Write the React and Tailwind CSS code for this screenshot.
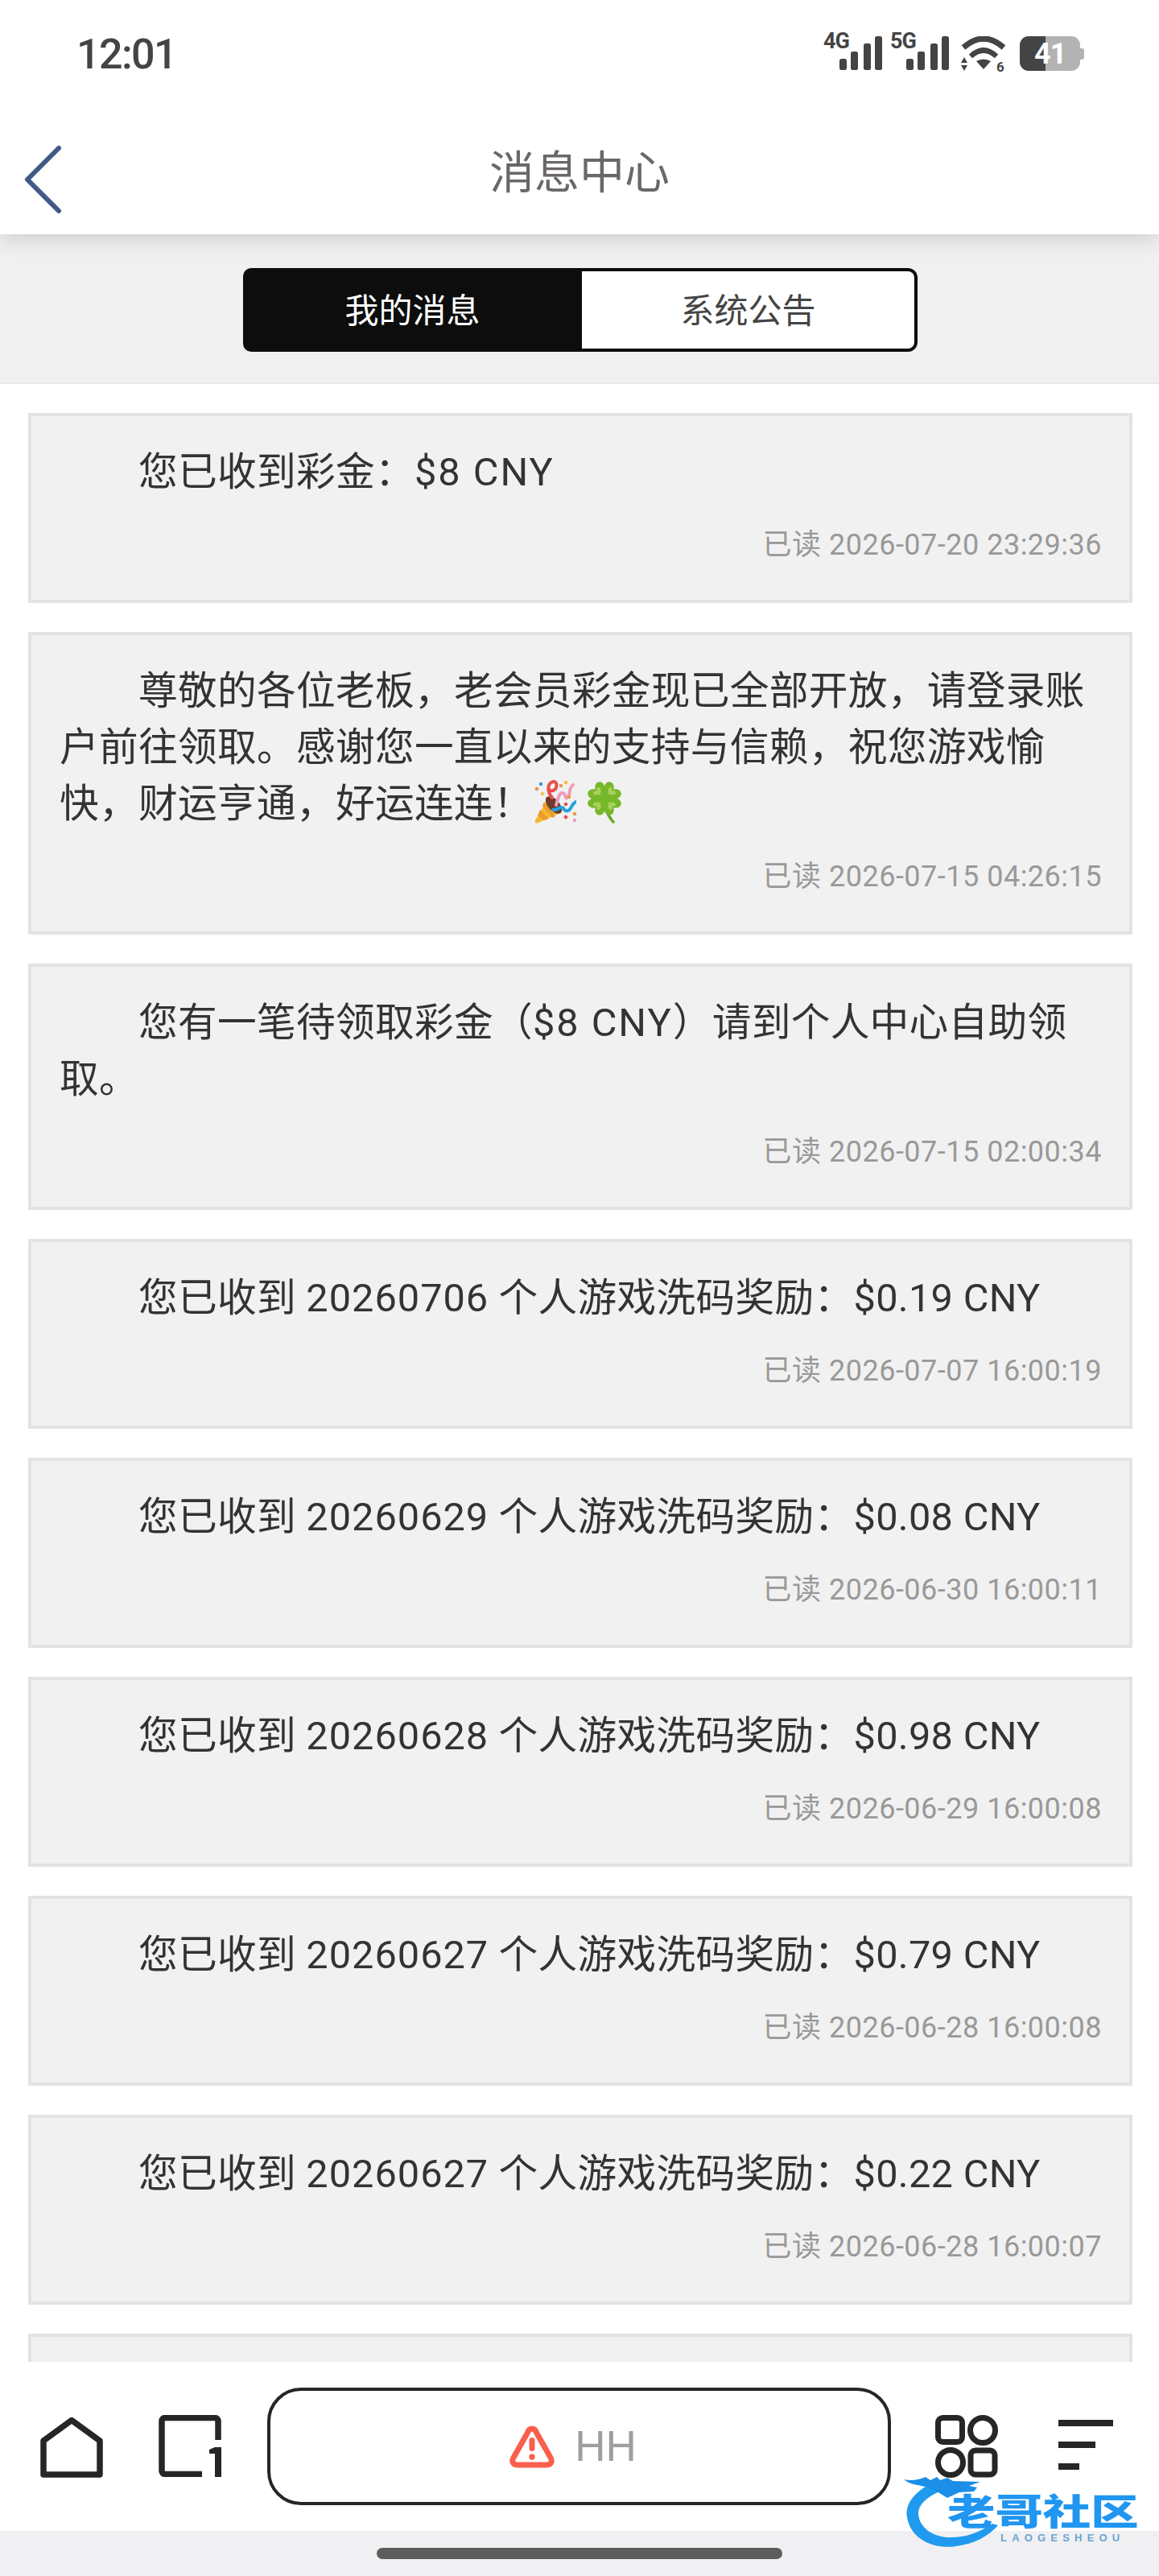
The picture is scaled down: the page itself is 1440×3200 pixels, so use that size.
import React from 'react';

const FONT = { fontFamily: 'Roboto, "Noto Sans CJK SC", sans-serif' };

const messages = [
  { text: '您已收到彩金：$8 CNY', time: '已读 2026-07-20 23:29:36' },
  {
    text: '尊敬的各位老板，老会员彩金现已全部开放，请登录账户前往领取。感谢您一直以来的支持与信赖，祝您游戏愉快，财运亨通，好运连连！',
    time: '已读 2026-07-15 04:26:15',
    emoji: true,
  },
  { text: '您有一笔待领取彩金（$8 CNY）请到个人中心自助领\n取。', time: '已读 2026-07-15 02:00:34' },
  { text: '您已收到 20260706 个人游戏洗码奖励：$0.19 CNY', time: '已读 2026-07-07 16:00:19' },
  { text: '您已收到 20260629 个人游戏洗码奖励：$0.08 CNY', time: '已读 2026-06-30 16:00:11' },
  { text: '您已收到 20260628 个人游戏洗码奖励：$0.98 CNY', time: '已读 2026-06-29 16:00:08' },
  { text: '您已收到 20260627 个人游戏洗码奖励：$0.79 CNY', time: '已读 2026-06-28 16:00:08' },
  { text: '您已收到 20260627 个人游戏洗码奖励：$0.22 CNY', time: '已读 2026-06-28 16:00:07' },
  { text: '', time: '' },
];

const Signal = ({ label }) => (
  <svg width="73" height="53" viewBox="0 -5 73 53" className="-mt-[5px] block">
    <text x="0" y="20" fontSize="27" fontWeight="700" fill="#444" fontFamily="Roboto, sans-serif" letterSpacing="-1">{label}</text>
    <rect x="20" y="33" width="9" height="14" rx="2.5" fill="#444" />
    <rect x="34" y="24" width="9" height="23" rx="2.5" fill="#444" />
    <rect x="50" y="14" width="9" height="33" rx="2.5" fill="#444" />
    <rect x="64" y="5" width="9" height="42" rx="2.5" fill="#444" />
  </svg>
);

const Wifi = () => (
  <svg width="58" height="50" viewBox="0 0 58 50" className="block">
    <path d="M3 14 Q28 -8 53 14" fill="none" stroke="#444" strokeWidth="7" />
    <path d="M12 25 Q28 10 44 25" fill="none" stroke="#444" strokeWidth="6.5" />
    <path d="M19 31 Q28 26 37 31 L28 41 Z" fill="#444" />
    <path d="M4 26 L8 33 H0 Z M0 36 H8 L4 43 Z" fill="#444" />
    <text x="44" y="44" fontSize="17" fontWeight="700" fill="#444" fontFamily="Roboto, sans-serif">6</text>
  </svg>
);

const Battery = () => (
  <div className="relative flex h-[43px] w-[80px] items-center">
    <div className="flex h-full w-[75px] overflow-hidden rounded-[11px]">
      <div className="h-full w-[32px] bg-[#444]" />
      <div className="h-full flex-1 bg-[#b3b3b3]" />
    </div>
    <div className="h-[14px] w-[5px] rounded-r-[3px] bg-[#b3b3b3]" />
    <span className="absolute left-[18px] top-[2px] text-[36px] font-bold leading-[40px] tracking-[-1px] text-white" style={FONT}>41</span>
  </div>
);

const Popper = () => (
  <svg width="54" height="54" viewBox="0 0 54 54" className="block">
    <path d="M3 50 C2 54 4 54 7 53 L34 41 L19 23 Z" fill="#f5b82e" />
    <path d="M9 37 L20 48 L14 50 L6 44 Z M14 27 L28 45 L24 47 L12 32 Z" fill="#ee9a2c" />
    <ellipse cx="26" cy="31" rx="7" ry="13" transform="rotate(-42 26 31)" fill="#6b3d2a" />
    <path d="M24 22 C18 14 17 5 25 2 C31 1 31 11 25 13 C21 14 20 12 20 11" fill="none" stroke="#e8504a" strokeWidth="4" strokeLinecap="round" />
    <path d="M29 31 C31 24 33 15 37 16 C42 17 39 24 43 22 C47 20 44 9 50 6" fill="none" stroke="#ef9cbc" strokeWidth="4" strokeLinecap="round" />
    <path d="M25 37 C31 38 35 31 38 35 C40 39 44 40 47 35 C49 32 50 28 54 27" fill="none" stroke="#22a3e0" strokeWidth="4" strokeLinecap="round" />
    <rect x="8" y="3" width="4" height="4" fill="#3f9be0" />
    <rect x="3" y="9" width="4" height="4" fill="#ee8f3c" transform="rotate(30 5 11)" />
    <rect x="10" y="15" width="4" height="4" fill="#f2c14e" transform="rotate(30 12 17)" />
    <rect x="33" y="5" width="4" height="4" fill="#ee9a4a" />
    <rect x="39" y="1" width="4" height="4" fill="#f2c14e" />
    <rect x="43" y="19" width="4" height="4" fill="#ee9a4a" />
    <rect x="39" y="28" width="4" height="4" fill="#e5484d" transform="rotate(45 41 30)" />
    <rect x="39" y="44" width="4" height="4" fill="#e5484d" transform="rotate(30 41 46)" />
    <rect x="50" y="40" width="4" height="4" fill="#ee9a4a" />
    <rect x="50" y="48" width="4" height="4" fill="#ef9cbc" transform="rotate(30 52 50)" />
  </svg>
);

const LEAF = 'M0 0 C-6 -5 -12 -9 -12 -15 C-12 -21 -4 -23 0 -16 C4 -23 12 -21 12 -15 C12 -9 6 -5 0 0 Z';

const Clover = () => (
  <svg width="48" height="54" viewBox="0 0 48 54" className="block">
    <path d="M24 23 C25 36 28 45 35 52" fill="none" stroke="#6da52d" strokeWidth="3.5" strokeLinecap="round" />
    {[-45, 45, 135, 225].map((r) => (
      <g key={r} transform={`translate(24 23) rotate(${r})`}>
        <path d={LEAF} fill="#76b82a" />
        <path d="M0 -7 C-4 -10 -6 -12 -5 -15 C-3 -17 -1 -15 0 -13 C1 -15 3 -17 5 -15 C6 -12 4 -10 0 -7 Z" fill="#a9d15c" />
      </g>
    ))}
  </svg>
);

// latin runs sit wider in the reference than Roboto gives them
const spaced = (text) =>
  text.split(/(\d{8}|\$8 CNY)/).map((part, i) => {
    if (/^\d{8}$/.test(part)) return <span key={i} className="tracking-[1px]">{part}</span>;
    if (part === '$8 CNY') return <span key={i} className="tracking-[2px]">{part}</span>;
    return part;
  });

const MessageCard = ({ text, time, emoji }) => (
  <div className="shrink-0 border-4 border-[#e3e3e3] bg-[#f1f1f1] pl-[35px] pr-[34px] pt-[35px] pb-[43px]">
    <p className="min-h-[70px] whitespace-pre-line text-[48.7px] font-normal leading-[70px] tracking-[0.3px] text-[#333] [text-indent:98px]">
      {spaced(text)}
      {emoji && (
        <span className="inline-flex gap-[11px] align-[-8px] [text-indent:0]">
          <Popper />
          <Clover />
        </span>
      )}
    </p>
    <p className="mt-[30px] min-h-[50px] text-right text-[36px] font-normal leading-[50px] tracking-[0.5px] text-[#999]">{time}</p>
  </div>
);

const Watermark = () => (
  <div className="absolute left-[1122px] top-[3073px] h-[92px] w-[296px]">
    <svg width="140" height="94" viewBox="0 0 140 94" className="absolute left-0 top-0">
      <path d="M31 14 C14 24 2 38 5 54 C10 84 42 94 66 90 C88 87 106 78 118 64 L111 62 C94 74 74 80 55 79 C36 78 20 66 19 50 C19 36 34 26 51 20 Z" fill="#1f9aee" />
      <path d="M1 7 C10 9 18 8 28 4 L34 8 L42 4 L46 8 L55 5 L62 9 L96 10 L82 15 L92 17 L88 22 L70 23 L55 30 L42 22 L31 17 C22 14 8 14 1 7 Z" fill="#1b8fe8" />
    </svg>
    <span className="absolute left-[55px] top-[26px] origin-left scale-x-[1.32] whitespace-nowrap text-[45px] font-black leading-[46px] text-[#2196f0]">老哥社区</span>
    <span className="absolute left-[121px] top-[73px] whitespace-nowrap text-[13px] font-bold leading-[13px] tracking-[6.2px] text-[#6ea5cf]" style={{ fontFamily: '"Liberation Sans", sans-serif' }}>LAOGESHEOU</span>
  </div>
);

export default function App() {
  return (
    <div className="relative flex h-[3200px] w-[1440px] flex-col overflow-hidden bg-white" style={FONT}>
      {/* header */}
      <header className="relative z-10 flex h-[291px] shrink-0 flex-col bg-white shadow-[0_4px_28px_rgba(0,0,0,0.16)]">
        <div className="flex h-[150px] items-start justify-between pl-[95px] pr-[93px] pt-[40px]">
          <span className="mt-[4px] text-[52px] font-medium leading-[48px] tracking-[-1.6px] text-[#444]">12:01</span>
          <div className="flex items-start">
            <div className="flex items-start gap-[10px]">
              <Signal label="4G" />
              <Signal label="5G" />
            </div>
            <div className="ml-[15px] mr-[15px] mt-[5px]"><Wifi /></div>
            <div className="mt-[5px]"><Battery /></div>
          </div>
        </div>
        <div className="relative flex flex-1 items-center justify-center pb-[12px]">
          <svg width="50" height="86" viewBox="0 0 50 86" className="absolute left-[29px] top-[30px]">
            <path d="M44 4 L5 43 L44 82" fill="none" stroke="#3f5a85" strokeWidth="6" strokeLinecap="round" strokeLinejoin="round" />
          </svg>
          <h1 className="text-[56px] font-normal leading-[70px] text-[#6b6768]">消息中心</h1>
        </div>
      </header>

      {/* tabs */}
      <div className="flex h-[186px] shrink-0 justify-center border-b-2 border-[#e8e8e8] bg-[#f0f0f0] pt-[42px]">
        <div className="flex h-[104px] w-[838px] translate-x-[1px]">
          <div className="flex w-[421px] items-center justify-center rounded-l-[10px] bg-[#0c0d0c] pt-[2px] text-[42px] font-normal text-white">我的消息</div>
          <div className="flex flex-1 items-center justify-center rounded-r-[12px] border-4 border-l-0 border-[#0c0d0c] bg-white pt-[2px] text-[42px] font-normal text-[#444]">系统公告</div>
        </div>
      </div>

      {/* list */}
      <div className="flex min-h-0 flex-1 flex-col gap-[36px] overflow-hidden bg-white pl-[35px] pr-[33px] pt-[36px]">
        {messages.map((m, i) => (
          <MessageCard key={i} {...m} />
        ))}
      </div>

      {/* bottom nav */}
      <nav className="relative flex h-[210px] shrink-0 items-start bg-white pl-[50px] pt-[32px]">
        <svg width="78" height="76" viewBox="0 0 78 76" className="mt-[36px] block">
          <path d="M39 4.5 L74 30 V72 H4 V30 Z" fill="none" stroke="#262626" strokeWidth="7.5" strokeLinejoin="round" />
        </svg>
        <svg width="78" height="77" viewBox="0 0 78 77" className="ml-[69px] mt-[34px] block">
          <path d="M54 73.5 H8 a4 4 0 0 1 -4 -4 V7.5 a4 4 0 0 1 4 -4 H70 a4 4 0 0 1 4 4 V31" fill="none" stroke="#262626" strokeWidth="7.5" />
          <path d="M70 40 H78 V77 H70 V48 H63 V43 Z" fill="#262626" />
        </svg>
        <div className="ml-[57px] flex h-[146px] w-[775px] items-center justify-center gap-[24px] rounded-[42px] border-4 border-[#262626] pr-[16px]">
          <svg width="58" height="55" viewBox="0 0 58 55" className="block">
            <path d="M29 5 C31 5 33 6 34 9 L52 41 C55 46 52 50 47 50 H11 C6 50 3 46 6 41 L24 9 C25 6 27 5 29 5 Z" fill="none" stroke="#fa5f4d" strokeWidth="7" strokeLinejoin="round" />
            <rect x="25.5" y="16" width="7" height="17" rx="3.5" fill="#fa5f4d" />
            <circle cx="29" cy="40" r="3.7" fill="#fa5f4d" />
          </svg>
          <span className="text-[53px] leading-[60px] text-[#9e9e9e]" style={{ fontFamily: '"Liberation Sans", sans-serif' }}>HH</span>
        </div>
        <svg width="78" height="78" viewBox="0 0 78 78" className="ml-[55px] mt-[34px] block">
          <g fill="none" stroke="#262626" strokeWidth="7">
            <rect x="3.5" y="3.5" width="30" height="30" rx="6" />
            <circle cx="59" cy="19" r="15.5" />
            <circle cx="19" cy="59" r="15.5" />
            <rect x="44" y="44" width="30" height="30" rx="6" />
          </g>
        </svg>
        <div className="ml-[75px] mt-[40px] flex w-[68px] flex-col gap-[19px]">
          <div className="h-[8px] w-[68px] bg-[#262626]" />
          <div className="h-[8px] w-[46px] bg-[#262626]" />
          <div className="h-[8px] w-[26px] bg-[#262626]" />
        </div>
      </nav>

      {/* gesture bar */}
      <div className="flex h-[56px] shrink-0 justify-center bg-[#f0f0f2] pt-[21px]">
        <div className="h-[14px] w-[504px] rounded-full bg-[#5c5c5c]" />
      </div>

      <Watermark />
    </div>
  );
}
